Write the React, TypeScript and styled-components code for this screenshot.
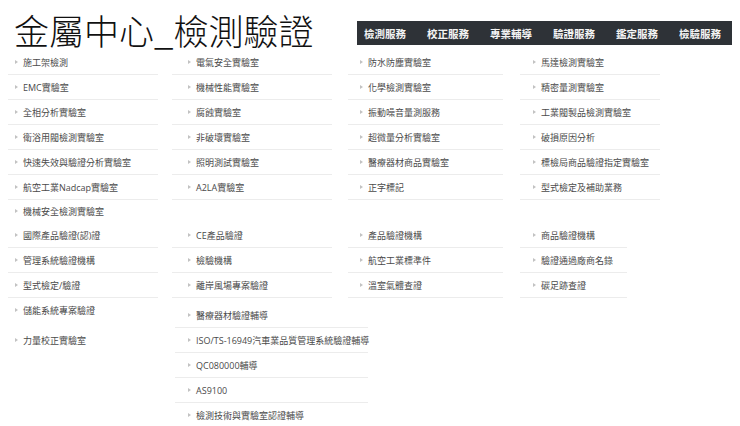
import styled, { createGlobalStyle } from "styled-components";

const GlobalStyle = createGlobalStyle`
  body {
    margin: 0;
    background: #ffffff;
    font-family: "Open Sans", "Noto Sans CJK TC", sans-serif;
  }
`;

const Page = styled.div`
  width: 740px;
  height: 426px;
  overflow: hidden;
`;

const Header = styled.header`
  display: flex;
  justify-content: space-between;
  align-items: flex-start;
  height: 50px;
  padding: 0 8px 0 14px;
  box-sizing: border-box;
`;

const Title = styled.h1`
  margin: 10px 0 0;
  font-family: "Noto Sans CJK TC", sans-serif;
  font-size: 35px;
  line-height: 40px;
  font-weight: 300;
  color: #111111;
  white-space: nowrap;
`;

const Nav = styled.nav`
  display: flex;
  align-items: center;
  gap: 21px;
  height: 24px;
  margin-top: 21px;
  padding: 0 11px 0 7px;
  background: #2e3237;
`;

const NavItem = styled.span`
  font-family: "Noto Sans CJK TC", sans-serif;
  font-size: 10.5px;
  font-weight: 700;
  color: #f4f4f4;
  white-space: nowrap;
`;

const Grid = styled.div`
  display: grid;
  grid-template-columns: 164px 176px 172px 140px;
  padding-left: 8px;
`;

const Lower = styled.div`
  display: flex;
  padding-left: 8px;
`;

const Column = styled.div<{ $w: number; $top?: number; $gap?: number; $shift?: number }>`
  display: flex;
  flex-direction: column;
  flex: none;
  width: ${(p) => p.$w}px;
  margin-left: ${(p) => p.$shift ?? 0}px;
  padding-top: ${(p) => p.$top ?? 0}px;
  gap: ${(p) => p.$gap ?? 0}px;
`;

const Item = styled.div<{ $w: number; $indent: number; $lined?: boolean; $h?: number }>`
  display: flex;
  align-items: center;
  gap: 5px;
  box-sizing: content-box;
  width: ${(p) => p.$w - p.$indent}px;
  height: ${(p) => p.$h ?? 24}px;
  padding-left: ${(p) => p.$indent}px;
  border-bottom: 1px solid ${(p) => (p.$lined ? "#ececec" : "transparent")};
  font-size: 9px;
  color: #4a4a4a;
  white-space: nowrap;
`;

const Bullet = styled.span`
  flex: none;
  width: 0;
  height: 0;
  border-left: 3px solid #c2c2c2;
  border-top: 2.5px solid transparent;
  border-bottom: 2.5px solid transparent;
`;

type Col = { w: number; indent: number };

const COLS_TOP: Col[] = [
  { w: 150, indent: 7 },
  { w: 160, indent: 16 },
  { w: 155, indent: 12 },
  { w: 140, indent: 13 },
];

const COLS_MID: Col[] = [
  { w: 150, indent: 7 },
  { w: 160, indent: 16 },
  { w: 155, indent: 12 },
  { w: 107, indent: 13 },
];

const NAV = ["檢測服務", "校正服務", "專業輔導", "驗證服務", "鑑定服務", "檢驗服務"];

const TOP_ROWS = [
  ["施工架檢測", "電氣安全實驗室", "防水防塵實驗室", "馬達檢測實驗室"],
  ["EMC實驗室", "機械性能實驗室", "化學檢測實驗室", "精密量測實驗室"],
  ["全相分析實驗室", "腐蝕實驗室", "振動噪音量測服務", "工業閥製品檢測實驗室"],
  ["衛浴用閥檢測實驗室", "非破壞實驗室", "超微量分析實驗室", "破損原因分析"],
  ["快速失效與驗證分析實驗室", "照明測試實驗室", "醫療器材商品實驗室", "標檢局商品驗證指定實驗室"],
  ["航空工業Nadcap實驗室", "A2LA實驗室", "正字標記", "型式檢定及補助業務"],
];

const MID_ROWS = [
  ["國際產品驗證(認)證", "CE產品驗證", "產品驗證機構", "商品驗證機構"],
  ["管理系統驗證機構", "檢驗機構", "航空工業標準件", "驗證通過廠商名錄"],
  ["型式檢定/驗證", "離岸風場專案驗證", "溫室氣體查證", "碳足跡查證"],
];

const LOWER_LEFT = ["儲能系統專案驗證", "力量校正實驗室"];

const LOWER_RIGHT = [
  "醫療器材驗證輔導",
  "ISO/TS-16949汽車業品質管理系統驗證輔導",
  "QC080000輔導",
  "AS9100",
  "檢測技術與實驗室認證輔導",
];

const Entry = ({ label, col, lined = true, h }: { label: string; col: Col; lined?: boolean; h?: number }) => (
  <Item $w={col.w} $indent={col.indent} $lined={lined} $h={h}>
    <Bullet />
    {label}
  </Item>
);

const App = () => {
  return (
    <Page>
      <GlobalStyle />
      <Header>
        <Title>金屬中心_檢測驗證</Title>
        <Nav>
          {NAV.map((n) => (
            <NavItem key={n}>{n}</NavItem>
          ))}
        </Nav>
      </Header>

      <Grid>
        {TOP_ROWS.flatMap((row, r) =>
          row.map((label, c) => <Entry key={`t${r}-${c}`} label={label} col={COLS_TOP[c]} />)
        )}
      </Grid>

      <Grid>
        <Entry label="機械安全檢測實驗室" col={COLS_TOP[0]} lined={false} h={22} />
      </Grid>

      <Grid>
        {MID_ROWS.flatMap((row, r) =>
          row.map((label, c) => <Entry key={`m${r}-${c}`} label={label} col={COLS_MID[c]} />)
        )}
      </Grid>

      <Lower>
        <Column $w={164} $gap={5}>
          {LOWER_LEFT.map((label) => (
            <Entry key={label} label={label} col={{ w: 150, indent: 7 }} lined={false} />
          ))}
        </Column>
        <Column $w={193} $top={5} $shift={3}>
          {LOWER_RIGHT.map((label, i) => (
            <Entry
              key={label}
              label={label}
              col={{ w: 193, indent: 13 }}
              lined={i < LOWER_RIGHT.length - 1}
            />
          ))}
        </Column>
      </Lower>
    </Page>
  );
};

export default App;
